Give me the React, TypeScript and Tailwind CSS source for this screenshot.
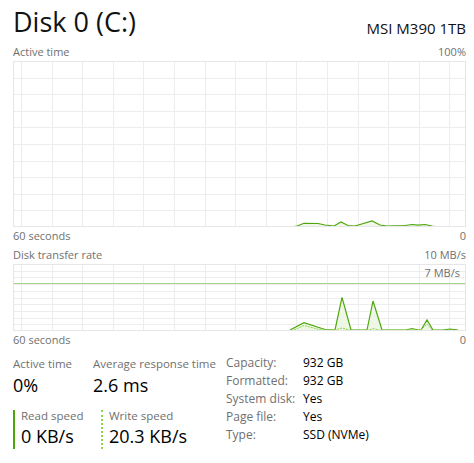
import React from "react";

const FONT = { fontFamily: '"Open Sans", "Noto Sans", sans-serif' };

function Grid({ w, h, rows }: { w: number; h: number; rows: number }) {
  const vs: number[] = [];
  for (let i = 0; i < 15; i++) vs.push(8 + i * 30.6);
  const hs: number[] = [];
  for (let i = 1; i < rows; i++) hs.push((h / rows) * i);
  return (
    <g>
      {vs.map((x, i) => (
        <line key={"v" + i} x1={Math.round(x) + 0.5} x2={Math.round(x) + 0.5} y1={0} y2={h} stroke="#ededed" strokeWidth={1} />
      ))}
      {hs.map((y, i) => (
        <line key={"h" + i} x1={0} x2={w} y1={Math.round(y) + 0.5} y2={Math.round(y) + 0.5} stroke="#ededed" strokeWidth={1} />
      ))}
    </g>
  );
}

function toPts(p: number[][]) {
  return p.map((q) => q.join(",")).join(" ");
}

function Chart1() {
  const w = 453;
  const h = 166;
  const line = [
    [277, 166], [284, 165], [291, 162.3], [305, 162.5], [312, 164], [321, 165],
    [328, 161], [335, 164.5], [342, 165], [359, 160], [367, 164], [374, 165],
    [392, 164.5], [399, 163.5], [405, 164.2], [412, 163.5], [419, 165], [425, 166],
  ];
  return (
    <svg width={w} height={h} className="block">
      <Grid w={w} h={h} rows={10} />
      <polygon points={toPts([...line, [277, 166]])} fill="#f1f8ea" />
      <polyline points={toPts(line)} fill="none" stroke="#4da60c" strokeWidth={1.2} />
      <rect x={0.5} y={0.5} width={w - 1} height={h - 1} fill="none" stroke="#e6e6e6" />
    </svg>
  );
}

function Chart2() {
  const w = 453;
  const h = 67;
  const line = [
    [277, 66], [291, 58.7], [312, 65.5], [322, 66], [329, 33.3], [338, 66], [354, 66],
    [360, 37], [369, 66], [393, 66], [399, 64.5], [405, 66], [408, 66], [414, 56],
    [420, 66], [430, 66], [437, 65], [445, 66],
  ];
  const dash = [
    [281, 66], [291, 61.5], [308, 66], [322, 66], [329, 64], [336, 66], [356, 66],
    [360, 64.5], [366, 66], [408, 66], [414, 60], [419, 66],
  ];
  return (
    <svg width={w} height={h} className="block">
      <Grid w={w} h={h} rows={10} />
      <line x1={0} x2={w} y1={19.5} y2={19.5} stroke="#a3d487" strokeWidth={1} />
      <polygon points={toPts([...line, [277, 66]])} fill="#eef7e6" />
      <polyline points={toPts(line)} fill="none" stroke="#4da60c" strokeWidth={1.2} />
      <polyline points={toPts(dash)} fill="none" stroke="#8fd44a" strokeWidth={1} strokeDasharray="2 1" />
      <rect x={0.5} y={0.5} width={w - 1} height={h - 1} fill="none" stroke="#e6e6e6" />
    </svg>
  );
}

export default function App() {
  return (
    <div className="w-[474px] h-[463px] bg-white text-black overflow-hidden pl-[13px] pr-[8px]" style={FONT}>
      <div className="h-[44px] flex justify-between items-start">
        <div className="text-[27px] leading-[38px] mt-[3px] text-[#111]">Disk 0 (C:)</div>
        <div className="text-[15px] leading-[20px] mt-[18px] text-[#111]">MSI M390 1TB</div>
      </div>
      <div className="h-[17px] flex justify-between items-center text-[11px] text-[#707070]">
        <span>Active time</span>
        <span>100%</span>
      </div>
      <Chart1 />
      <div className="h-[19px] flex justify-between items-center text-[11px] text-[#707070]">
        <span>60 seconds</span>
        <span>0</span>
      </div>
      <div className="h-[18px] flex justify-between items-center text-[11px] text-[#707070]">
        <span>Disk transfer rate</span>
        <span>10 MB/s</span>
      </div>
      <div className="relative">
        <Chart2 />
        <div className="absolute right-[6px] top-[2px] text-[11px] leading-[14px] text-[#707070]">7 MB/s</div>
      </div>
      <div className="h-[19px] flex justify-between items-center text-[11px] text-[#707070]">
        <span>60 seconds</span>
        <span>0</span>
      </div>
      <div className="flex mt-[5px]">
        <div className="w-[213px] flex flex-col">
          <div className="flex">
            <div className="w-[80px]">
              <div className="text-[11.5px] leading-[17px] text-[#707070]">Active time</div>
              <div className="text-[18px] leading-[26px]">0%</div>
            </div>
            <div>
              <div className="text-[11.5px] leading-[17px] text-[#707070]">Average response time</div>
              <div className="text-[18px] leading-[26px]">2.6 ms</div>
            </div>
          </div>
          <div className="flex mt-[12px]">
            <div className="w-[88px] border-l-2 border-[#4da60c] pl-[6px] h-[39px]">
              <div className="text-[11.5px] leading-[14px] text-[#707070] -mt-[1px]">Read speed</div>
              <div className="text-[18px] leading-[26px]">0 KB/s</div>
            </div>
            <div className="border-l-2 border-dotted border-[#8fd44a] pl-[6px] h-[39px]">
              <div className="text-[11.5px] leading-[14px] text-[#707070] -mt-[1px]">Write speed</div>
              <div className="text-[18px] leading-[26px]">20.3 KB/s</div>
            </div>
          </div>
        </div>
        <div className="grid grid-cols-[77px_auto] auto-rows-[18px] text-[12px] leading-[18px] -mt-[1px]">
          <span className="text-[#707070]">Capacity:</span>
          <span>932 GB</span>
          <span className="text-[#707070]">Formatted:</span>
          <span>932 GB</span>
          <span className="text-[#707070]">System disk:</span>
          <span>Yes</span>
          <span className="text-[#707070]">Page file:</span>
          <span>Yes</span>
          <span className="text-[#707070]">Type:</span>
          <span>SSD (NVMe)</span>
        </div>
      </div>
    </div>
  );
}
